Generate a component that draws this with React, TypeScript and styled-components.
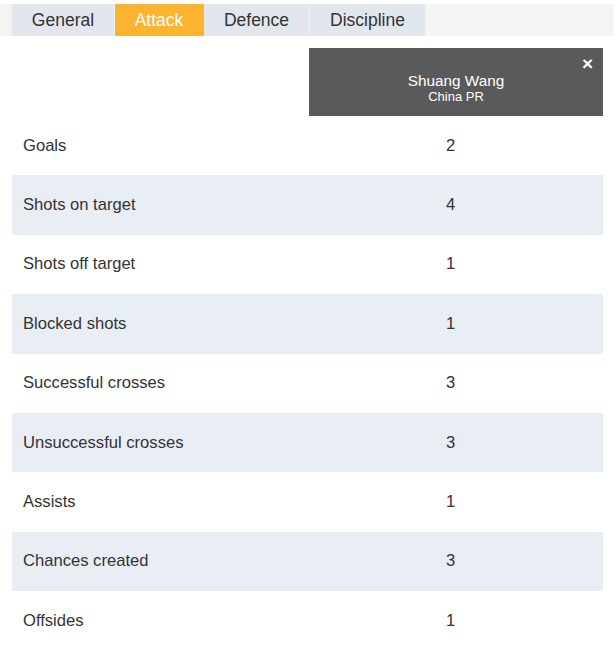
import React from "react";
import styled, { createGlobalStyle } from "styled-components";

const Global = createGlobalStyle`
  html, body { margin: 0; padding: 0; background: #ffffff; }
  body { font-family: "Liberation Sans", Arial, sans-serif; color: #333333; }
`;

const Page = styled.div`
  width: 616px;
  height: 663px;
  padding-top: 4px;
  box-sizing: border-box;
  background: #ffffff;
`;

const TabBar = styled.div`
  display: flex;
  width: 613px;
  height: 32px;
  padding-left: 12px;
  box-sizing: border-box;
  background: #f4f4f4;
`;

const Tab = styled.div<{ $active?: boolean; $w: number }>`
  width: ${(p) => p.$w}px;
  display: flex;
  align-items: center;
  justify-content: center;
  font-size: 17.5px;
  background: ${(p) => (p.$active ? "#fbb430" : "#e2e7ee")};
  color: ${(p) => (p.$active ? "#ffffff" : "#333333")};
  border-right: 1px solid ${(p) => (p.$active ? "#fbb430" : "#eef1f5")};
  box-sizing: border-box;
`;

const Table = styled.div`
  margin: 12px 13px 0 12px;
  display: flex;
  flex-direction: column;
`;

const HeaderRow = styled.div`
  display: grid;
  grid-template-columns: 297px 294px;
  height: 68px;
`;

const PlayerCard = styled.div`
  grid-column: 2;
  position: relative;
  background: #5a5a5a;
  color: #ffffff;
  display: flex;
  flex-direction: column;
  align-items: center;
  justify-content: center;
  padding-top: 12px;
  box-sizing: border-box;
`;

const PlayerName = styled.div`
  font-size: 15.3px;
  line-height: 17px;
`;

const PlayerTeam = styled.div`
  font-size: 13px;
  line-height: 15px;
`;

const Close = styled.span`
  position: absolute;
  top: 6px;
  right: 10px;
  font-size: 19px;
  font-weight: bold;
  line-height: 20px;
`;

const Row = styled.div<{ $alt?: boolean }>`
  display: grid;
  grid-template-columns: 286px 1fr;
  align-items: center;
  height: 59.4px;
  background: ${(p) => (p.$alt ? "#e9eef5" : "#ffffff")};
  font-size: 16.6px;
  color: #333333;
`;

const Label = styled.div`
  padding-left: 11px;
`;

const Value = styled.div`
  text-align: center;
`;

const stats: [string, number][] = [
  ["Goals", 2],
  ["Shots on target", 4],
  ["Shots off target", 1],
  ["Blocked shots", 1],
  ["Successful crosses", 3],
  ["Unsuccessful crosses", 3],
  ["Assists", 1],
  ["Chances created", 3],
  ["Offsides", 1],
];

const tabs: [string, number][] = [
  ["General", 103],
  ["Attack", 89],
  ["Defence", 106],
  ["Discipline", 116],
];

export default function App() {
  return (
    <Page>
      <Global />
      <TabBar>
        {tabs.map(([t, w]) => (
          <Tab key={t} $w={w} $active={t === "Attack"}>
            {t}
          </Tab>
        ))}
      </TabBar>
      <Table>
        <HeaderRow>
          <PlayerCard>
            <Close>×</Close>
            <PlayerName>Shuang Wang</PlayerName>
            <PlayerTeam>China PR</PlayerTeam>
          </PlayerCard>
        </HeaderRow>
        {stats.map(([l, v], i) => (
          <Row key={l} $alt={i % 2 === 1}>
            <Label>{l}</Label>
            <Value>{v}</Value>
          </Row>
        ))}
      </Table>
    </Page>
  );
}
